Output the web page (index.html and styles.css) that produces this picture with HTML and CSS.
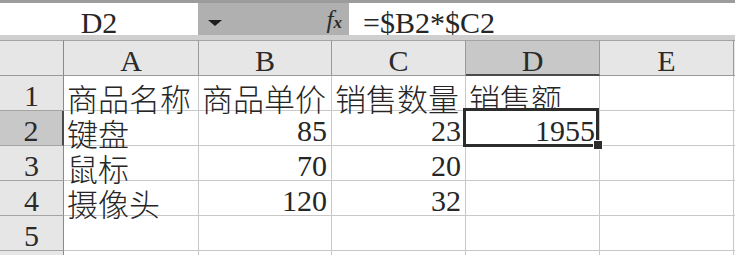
FILE: index.html
```html
<!DOCTYPE html>
<html lang="zh">
<head>
<meta charset="utf-8">
<title>销售额</title>
<link rel="stylesheet" href="styles.css">
</head>
<body>
<div class="app">
  <div class="toolbar">
    <div class="namebox">D2</div>
    <div class="tools">
      <span class="drop"></span>
      <span class="fx"><span class="fx-f">f</span><span class="fx-x">x</span></span>
    </div>
    <div class="formula">=$B2*$C2</div>
  </div>
  <div class="spacer"></div>
  <div class="sheet">
    <div class="hd corner"></div>
    <div class="hd col">A</div>
    <div class="hd col">B</div>
    <div class="hd col">C</div>
    <div class="hd col active">D</div>
    <div class="hd col">E</div>
    <div class="hd col"></div>

    <div class="rh">1</div>
    <div class="c"><span class="zh">商品名称</span></div>
    <div class="c"><span class="zh">商品单价</span></div>
    <div class="c"><span class="zh">销售数量</span></div>
    <div class="c"><span class="zh">销售额</span></div>
    <div class="c"></div>
    <div class="c"></div>

    <div class="rh active">2</div>
    <div class="c"><span class="zh">键盘</span></div>
    <div class="c num">85</div>
    <div class="c num">23</div>
    <div class="c num sel">1955<span class="sel-box"></span><span class="handle"></span></div>
    <div class="c"></div>
    <div class="c"></div>

    <div class="rh">3</div>
    <div class="c"><span class="zh">鼠标</span></div>
    <div class="c num">70</div>
    <div class="c num">20</div>
    <div class="c"></div>
    <div class="c"></div>
    <div class="c"></div>

    <div class="rh">4</div>
    <div class="c"><span class="zh">摄像头</span></div>
    <div class="c num">120</div>
    <div class="c num">32</div>
    <div class="c"></div>
    <div class="c"></div>
    <div class="c"></div>

    <div class="rh">5</div>
    <div class="c"></div>
    <div class="c"></div>
    <div class="c"></div>
    <div class="c"></div>
    <div class="c"></div>
    <div class="c"></div>

    <div class="rh short"></div>
    <div class="c short"></div>
    <div class="c short"></div>
    <div class="c short"></div>
    <div class="c short"></div>
    <div class="c short"></div>
    <div class="c short"></div>
  </div>
</div>
</body>
</html>
```
FILE: styles.css
```css
html, body {
  margin: 0;
  padding: 0;
  background: #c4c4c4;
  overflow: hidden;
}
body {
  width: 735px;
  height: 255px;
  font-family: "Liberation Serif", "Noto Sans CJK SC", serif;
  font-size: 30px;
  color: #262626;
}
.app {
  display: flex;
  flex-direction: column;
  width: 735px;
  height: 255px;
  overflow: hidden;
}
.toolbar {
  display: flex;
  height: 35px;
  box-sizing: border-box;
  border-top: 3px solid #9c9c9c;
  background: #b2b2b2;
}
.namebox {
  width: 198px;
  background: #fff;
  text-align: center;
  line-height: 30px;
  padding-top: 5px;
  box-sizing: border-box;
}
.tools {
  width: 151px;
  display: flex;
  align-items: center;
  justify-content: space-between;
  padding: 0 7px 0 10px;
  box-sizing: border-box;
  background: #b0b0b0;
}
.drop {
  width: 0;
  height: 0;
  border-left: 7px solid transparent;
  border-right: 7px solid transparent;
  border-top: 6px solid #1e1e1e;
  margin-top: 7px;
}
.fx {
  font-style: italic;
  color: #2a2a2a;
  line-height: 22px;
  margin-top: 2px;
}
.fx-f { font-size: 25px; }
.fx-x { font-size: 17px; font-weight: bold; }
.formula {
  flex: 1;
  background: #fff;
  padding: 5px 0 0 14px;
  line-height: 30px;
  box-sizing: border-box;
  white-space: nowrap;
}
.spacer {
  height: 5px;
  background: #cfcfcf;
}
.sheet {
  display: grid;
  width: 735px;
  grid-template-columns: 64px 135px 133px 134px 134px 134px 1fr;
  grid-template-rows: 36px repeat(5, 35px) 4px;
}
.hd {
  box-sizing: border-box;
  height: 36px;
  background: #e6e6e6;
  border-top: 1px solid #a4a4a4;
  border-bottom: 1px solid #9a9a9a;
  border-right: 1px solid #9a9a9a;
  padding-top: 5px;
  line-height: 30px;
  text-align: center;
  color: #2a2a2a;
}
.hd.corner {
  border-right-color: #8a8a8a;
}
.hd.active {
  background: #c8c8c8;
  border-bottom: 2px solid #4a4a4a;
}
.rh {
  box-sizing: border-box;
  height: 35px;
  background: #e6e6e6;
  border-bottom: 1px solid #a4a4a4;
  border-right: 1px solid #8a8a8a;
  padding-top: 6px;
  line-height: 28px;
  text-align: center;
  color: #2a2a2a;
}
.rh.active {
  background: #c8c8c8;
  border-right: 2px solid #4a4a4a;
}
.c {
  box-sizing: border-box;
  height: 35px;
  background: #fff;
  border-right: 1px solid #c8c8c8;
  border-bottom: 1px solid #c8c8c8;
  padding: 6px 4px 0 3px;
  line-height: 28px;
  white-space: nowrap;
}
.short {
  height: 4px;
  padding: 0;
  border-bottom: 0;
}
.zh {
  display: inline-block;
  height: 28px;
  line-height: 28px;
  font-family: "Noto Sans CJK SC", sans-serif;
  font-size: 31px;
  font-weight: 300;
  position: relative;
  top: 2px;
}
.num {
  text-align: right;
}
.sel {
  position: relative;
}
.sel-box {
  position: absolute;
  left: -3px;
  top: -3px;
  right: 0;
  bottom: -2px;
  border: 3px solid #2c2c2c;
  pointer-events: none;
}
.handle {
  position: absolute;
  width: 8px;
  height: 8px;
  right: -3px;
  bottom: -4px;
  background: #2c2c2c;
  outline: 1px solid #fff;
}
```
